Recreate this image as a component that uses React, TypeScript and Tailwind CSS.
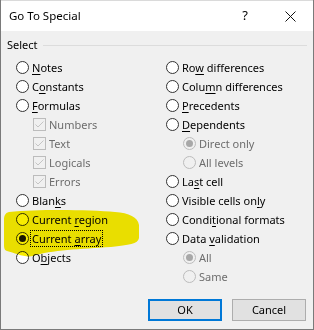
import React from "react";

type Item = {
  label: string;
  u: number; // index of accelerator letter, -1 for none
  kind: "radio" | "check" | "subradio";
  checked?: boolean;
  disabled?: boolean;
  focus?: boolean;
};

const left: Item[] = [
  { label: "Notes", u: 0, kind: "radio" },
  { label: "Constants", u: 1, kind: "radio" },
  { label: "Formulas", u: 0, kind: "radio" },
  { label: "Numbers", u: -1, kind: "check", checked: true, disabled: true },
  { label: "Text", u: -1, kind: "check", checked: true, disabled: true },
  { label: "Logicals", u: -1, kind: "check", checked: true, disabled: true },
  { label: "Errors", u: -1, kind: "check", checked: true, disabled: true },
  { label: "Blanks", u: 4, kind: "radio" },
  { label: "Current region", u: 8, kind: "radio" },
  { label: "Current array", u: 8, kind: "radio", checked: true, focus: true },
  { label: "Objects", u: 1, kind: "radio" },
];

const right: Item[] = [
  { label: "Row differences", u: 2, kind: "radio" },
  { label: "Column differences", u: 4, kind: "radio" },
  { label: "Precedents", u: 0, kind: "radio" },
  { label: "Dependents", u: 0, kind: "radio" },
  { label: "Direct only", u: -1, kind: "subradio", checked: true, disabled: true },
  { label: "All levels", u: -1, kind: "subradio", disabled: true },
  { label: "Last cell", u: 2, kind: "radio" },
  { label: "Visible cells only", u: 16, kind: "radio" },
  { label: "Conditional formats", u: 5, kind: "radio" },
  { label: "Data validation", u: 5, kind: "radio" },
  { label: "All", u: -1, kind: "subradio", checked: true, disabled: true },
  { label: "Same", u: -1, kind: "subradio", disabled: true },
];

function Label({ text, u }: { text: string; u: number }) {
  if (u < 0) return <>{text}</>;
  return (
    <>
      {text.slice(0, u)}
      <span className="underline underline-offset-[2px]">{text[u]}</span>
      {text.slice(u + 1)}
    </>
  );
}

function Radio({ checked, disabled }: { checked?: boolean; disabled?: boolean }) {
  return (
    <span
      className={`flex items-center justify-center w-[13px] h-[13px] rounded-full border shrink-0 ${
        disabled ? "border-[#bcbcbc] bg-[#f0f0f0]" : "border-[#333333] bg-white"
      }`}
    >
      {checked && (
        <span className={`w-[7px] h-[7px] rounded-full ${disabled ? "bg-[#a8a8a8]" : "bg-[#1a1a1a]"}`} />
      )}
    </span>
  );
}

function Check() {
  return (
    <span className="flex items-center justify-center w-[13px] h-[13px] border border-[#bcbcbc] bg-[#f0f0f0] shrink-0">
      <svg width="11" height="11" viewBox="0 0 11 11">
        <path d="M1.5 5.5 L4 8 L9.5 2.5" fill="none" stroke="#c4c4c4" strokeWidth="1" />
      </svg>
    </span>
  );
}

function Row({ item }: { item: Item }) {
  const indent = item.kind === "radio" ? "" : "pl-[17px]";
  return (
    <div className={`h-[19px] flex items-center ${indent}`}>
      {item.kind === "check" ? <Check /> : <Radio checked={item.checked} disabled={item.disabled} />}
      <span
        className={`ml-[1px] px-[1px] leading-[15px] whitespace-nowrap border ${
          item.focus ? "border-dotted border-black" : "border-transparent"
        } ${item.disabled ? "text-[#6d6d6d]" : "text-black"}`}
      >
        <Label text={item.label} u={item.u} />
      </span>
    </div>
  );
}

export default function App() {
  return (
    <div className="w-[314px] h-[330px] relative bg-[#f0f0f0] border-x border-b border-[#7a7a7a] font-['Noto_Sans',sans-serif] text-[11px] text-black overflow-hidden">
      {/* title bar */}
      <div className="h-[31px] bg-white border-t border-[#dadada] flex items-center pl-[8px]">
        <span className="flex-1 text-[11.5px]">Go To Special</span>
        <span className="w-[20px] text-center mr-[25px] text-[13px]">?</span>
        <span className="w-[20px] flex justify-center mr-[13px]">
          <svg width="11" height="11" viewBox="0 0 11 11">
            <path d="M0.5 0.5 L10.5 10.5 M10.5 0.5 L0.5 10.5" stroke="#111" strokeWidth="1" />
          </svg>
        </span>
      </div>

      {/* body */}
      <div className="pt-[6px]">
        <div className="h-[16px] flex items-center pl-[6px] pr-[6px]">
          <span>Select</span>
          <span className="flex-1 ml-[5px] h-px bg-[#dcdcdc]" />
        </div>
        <div className="mt-[5px] grid grid-cols-[150px_1fr]">
          <div className="pl-[15px]">
            {left.map((it) => (
              <Row key={it.label} item={it} />
            ))}
          </div>
          <div className="pl-[15px]">
            {right.map((it) => (
              <Row key={it.label} item={it} />
            ))}
          </div>
        </div>
        <div className="mt-[13px] flex justify-end gap-[10px] pr-[7px]">
          <button className="w-[74px] h-[22px] bg-[#e1e1e1] border-2 border-[#0078d7]">OK</button>
          <button className="w-[74px] h-[22px] bg-[#e1e1e1] border border-[#adadad]">Cancel</button>
        </div>
      </div>

      {/* highlighter stroke */}
      <svg
        className="absolute left-0 top-0 mix-blend-multiply pointer-events-none"
        width="314"
        height="330"
        viewBox="0 0 314 330"
      >
        <path
          d="M8 212 C 40 209, 90 210, 114 212 C 128 213, 137 217, 138 225 L 138 238 C 137 244, 128 245, 110 247 C 80 249, 50 250, 32 256 C 24 258, 14 253, 6 251 C 3 250, 3 247, 3 244 L 3 220 C 3 216, 4 213, 8 212 Z"
          fill="#f8ec00"
        />
      </svg>
    </div>
  );
}
